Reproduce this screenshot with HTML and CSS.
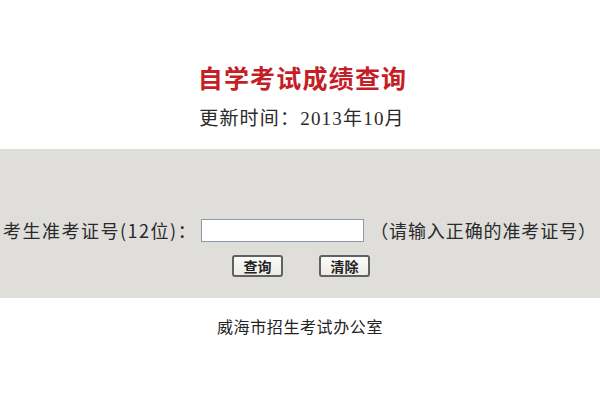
FILE: index.html
```html
<!DOCTYPE html>
<html lang="zh-CN">
<head>
<meta charset="utf-8">
<title>自学考试成绩查询</title>
<link rel="stylesheet" href="styles.css">
</head>
<body>
<div class="page">
  <h1 class="title">自学考试成绩查询</h1>
  <p class="subtitle">更新时间：2013年10月</p>
  <form class="band">
    <div class="row">
      <label class="label" for="zkz">考生准考证号(12位)：</label>
      <input class="field" id="zkz" type="text">
      <span class="hint">（请输入正确的准考证号）</span>
    </div>
    <div class="buttons">
      <button class="btn" type="button">查询</button>
      <button class="btn" type="reset">清除</button>
    </div>
  </form>
  <p class="footer">威海市招生考试办公室</p>
</div>
</body>
</html>
```

FILE: styles.css
```css
html, body {
  margin: 0;
  padding: 0;
  background: #ffffff;
}
body {
  font-family: "Liberation Serif", "Noto Sans CJK SC", serif;
  color: #222222;
}
.page {
  width: 600px;
  display: flex;
  flex-direction: column;
  align-items: stretch;
}
.title {
  margin: 0;
  padding-top: 62px;
  font-family: "Noto Sans CJK SC", sans-serif;
  font-weight: 700;
  font-size: 25px;
  line-height: 30px;
  color: #c41e26;
  text-align: center;
  letter-spacing: 1.2px;
  padding-left: 5px;
}
.subtitle {
  margin: 15px 0 0 0;
  font-size: 19px;
  line-height: 24px;
  text-align: center;
  color: #2a2a2a;
  letter-spacing: 1.2px;
  padding-left: 4px;
}
.band {
  margin: 18px 0 0 0;
  height: 149px;
  box-sizing: border-box;
  padding-top: 69px;
  background: #dfdedb;
  display: flex;
  flex-direction: column;
  align-items: center;
}
.row {
  display: flex;
  align-items: center;
  height: 24px;
  color: #2a2a2a;
  white-space: nowrap;
}
.label {
  font-family: "Noto Sans CJK SC", sans-serif;
  font-size: 18px;
  letter-spacing: 1.5px;
}
.field {
  width: 163px;
  height: 23px;
  box-sizing: border-box;
  margin: 0 6px 0 4px;
  padding: 0 2px;
  border: 1px solid #8a9aab;
  background: #ffffff;
}
.hint {
  font-family: "Noto Sans CJK SC", sans-serif;
  font-size: 18px;
  letter-spacing: 0.9px;
}
.buttons {
  display: flex;
  gap: 36px;
  margin-top: 13px;
  margin-left: 2px;
}
.btn {
  width: 51px;
  height: 22px;
  box-sizing: border-box;
  padding: 0;
  border: 2px solid #5f6163;
  border-radius: 3px;
  background: linear-gradient(#fbfbf9, #ecebe6);
  font-family: "Noto Sans CJK SC", sans-serif;
  font-size: 14px;
  font-weight: 700;
  line-height: 18px;
  color: #222222;
}
.footer {
  margin: 17px 0 0 0;
  font-family: "Noto Sans CJK SC", sans-serif;
  font-size: 16px;
  line-height: 22px;
  text-align: center;
  color: #222222;
  letter-spacing: 0.6px;
}
```
